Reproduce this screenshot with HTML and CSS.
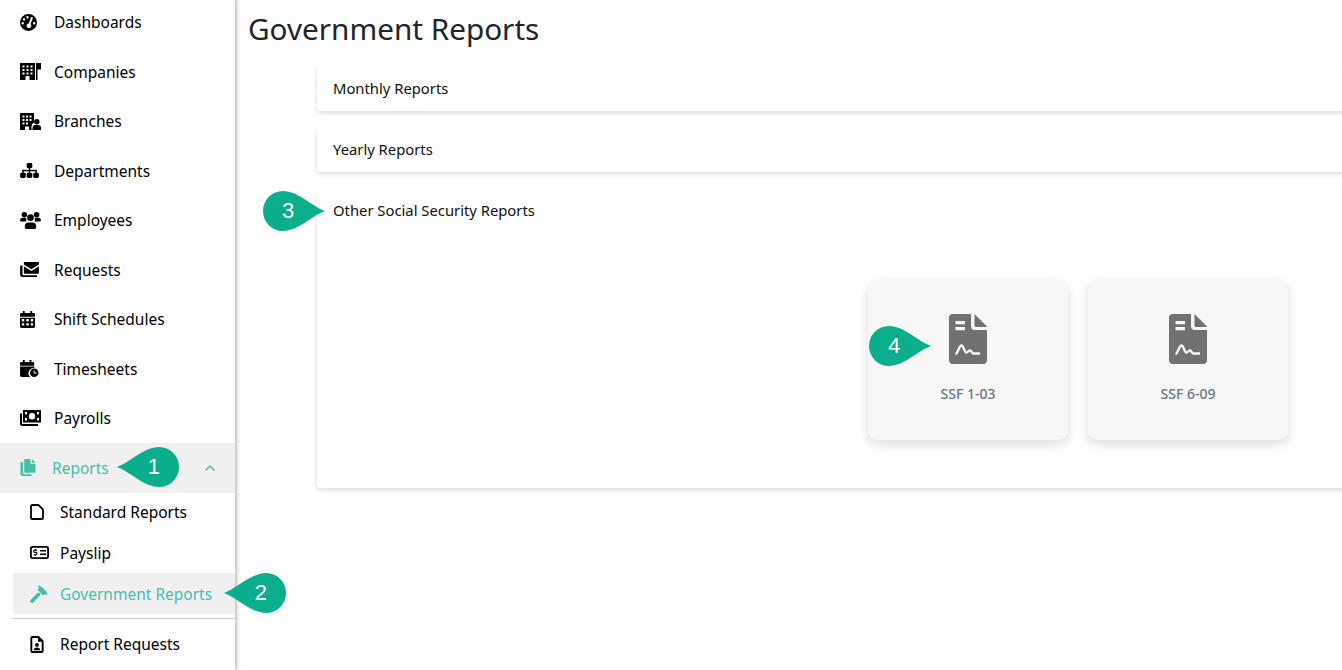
FILE: index.html
```html
<!DOCTYPE html>
<html lang="en">
<head>
<meta charset="utf-8">
<title>Government Reports</title>
<link rel="stylesheet" href="styles.css">
</head>
<body>
<div class="app">
  <nav class="sidebar">
    <a class="item"><i class="slot"><svg width="17" height="17" viewBox="0 0 18 18"><path fill-rule="evenodd" d="M9 0a9 9 0 1 1 0 18A9 9 0 0 1 9 0zM8 2.200a1.300 1.300 0 1 0 0 2.600 1.300 1.300 0 0 0 0-2.600zM4.300 4.400a1.300 1.300 0 1 0 0 2.600 1.300 1.300 0 0 0 0-2.600zM2.900 8.600a1.300 1.300 0 1 0 0 2.600 1.300 1.300 0 0 0 0-2.600zM15 8.600a1.300 1.300 0 1 0 0 2.600 1.300 1.300 0 0 0 0-2.600zM12.900 3.200a1 1 0 0 0-1.300.6L9.300 10a2.500 2.500 0 1 0 1.900.7l2.300-6.200a1 1 0 0 0-.6-1.300z"/></svg></i><span>Dashboards</span></a>
    <a class="item"><i class="slot"><svg width="21" height="17" viewBox="0 0 21 17"><path fill-rule="evenodd" d="M0 0h15v17H9.500v-4h-4v4H0zM2.500 2.500v2h2v-2zM6.500 2.500v2h2v-2zM10.500 2.500v2h2v-2zM2.500 6v2h2V6zM6.500 6v2h2V6zM10.500 6v2h2V6zM2.500 9.500v2h2v-2zM6.500 9.500v2h2v-2zM10.500 9.500v2h2v-2z"/><path d="M16 0h5v6.500h-3.500V17H16z"/></svg></i><span>Companies</span></a>
    <a class="item"><i class="slot"><svg width="21" height="17" viewBox="0 0 21 17"><path fill-rule="evenodd" d="M0 0h14v9.500a4.500 4.500 0 0 0-2.500 3.800V17H9v-3.500H5V17H0zM2.500 2.500v2h2v-2zM6 2.500v2h2v-2zM9.500 2.500v2h2v-2zM2.500 6v2h2V6zM6 6v2h2V6zM9.500 6v2h2V6zM2.500 9.500v2h2v-2zM6 9.500v2h2v-2z"/><circle cx="16.800" cy="8.800" r="2.700"/><path d="M12.500 17v-2.300c0-1.600 1.300-2.700 2.800-2.700h3c1.500 0 2.700 1.100 2.700 2.700V17z"/></svg></i><span>Branches</span></a>
    <a class="item"><i class="slot"><svg width="19" height="15" viewBox="0 0 20 16"><rect x="7" width="6" height="5.500" rx="1.500"/><rect x="9.250" y="5" width="1.500" height="6"/><rect x="2.300" y="7.300" width="15.400" height="1.500"/><rect x="2.300" y="7.300" width="1.500" height="4"/><rect x="16.200" y="7.300" width="1.500" height="4"/><rect y="10.500" width="6" height="5.500" rx="1.500"/><rect x="7" y="10.500" width="6" height="5.500" rx="1.500"/><rect x="14" y="10.500" width="6" height="5.500" rx="1.500"/></svg></i><span>Departments</span></a>
    <a class="item"><i class="slot"><svg width="21" height="17" viewBox="0 0 22 18"><circle cx="4.500" cy="2.900" r="2.900"/><circle cx="17.500" cy="2.900" r="2.900"/><circle cx="11" cy="6" r="3.500"/><path d="M0 9c0-1.800 1.100-2.800 2.300-2.800h2.600c.7 0 1.300.3 1.700.7a5 5 0 0 0 .2 3.100H1.500C.7 10 0 9.700 0 9zM22 9c0-1.800-1.100-2.800-2.300-2.800h-2.600c-.7 0-1.300.3-1.700.7.400 1 .4 2.200-.2 3.100h5.300c.8 0 1.500-.3 1.500-1zM5 15c0-2.400 1.700-4 3.700-4h4.600c2 0 3.700 1.600 3.700 4v1.500c0 .8-.7 1.500-1.500 1.500h-9C5.700 18 5 17.300 5 16.500z"/></svg></i><span>Employees</span></a>
    <a class="item"><i class="slot"><svg width="19" height="15" viewBox="0 0 20 16"><path d="M4 0h16v2.600l-8 5-8-5zM4 4.500l8 5 8-5v6.800a1.300 1.300 0 0 1-1.300 1.300H5.300A1.300 1.300 0 0 1 4 11.300z"/><path d="M0 3.700h2.500v9.400c0 .6.400 1 1 1H18V16H2.500A2.500 2.500 0 0 1 0 13.500z"/></svg></i><span>Requests</span></a>
    <a class="item"><i class="slot"><svg width="15" height="17" viewBox="0 0 16 18"><path fill-rule="evenodd" d="M3 0h2v2h6V0h2v2h1.500A1.500 1.500 0 0 1 16 3.500V6H0V3.500A1.500 1.500 0 0 1 1.500 2H3zM0 7h16v9.500a1.500 1.500 0 0 1-1.500 1.500h-13A1.500 1.500 0 0 1 0 16.500zM2 8.500V11h2.500V8.500zM6.700 8.500V11h2.600V8.500zM11.500 8.500V11H14V8.500zM2 13v2.500h2.500V13zM6.700 13v2.500h2.600V13zM11.500 13v2.500H14V13z"/></svg></i><span>Shift Schedules</span></a>
    <a class="item"><i class="slot"><svg width="19" height="17" viewBox="0 0 20 18"><path d="M3 0h2v2h5V0h2v2h1.500A1.500 1.500 0 0 1 15 3.500V6H0V3.500A1.500 1.500 0 0 1 1.500 2H3zM0 7h15v1.600a5.500 5.500 0 0 0-4.400 9.400H1.500A1.500 1.500 0 0 1 0 16.500z"/><path fill-rule="evenodd" d="M15 9a4.500 4.500 0 1 1 0 9 4.500 4.500 0 0 1 0-9zM14.500 11v3.200h3v-1h-2V11z"/></svg></i><span>Timesheets</span></a>
    <a class="item"><i class="slot"><svg width="21" height="16" viewBox="0 0 21 16"><path fill-rule="evenodd" d="M3 0h18v12.500H3zM12 3a3.200 3.200 0 1 0 0 6.400A3.200 3.200 0 0 0 12 3zM5 2v2.500h2V2zM17 8v2.500h2V8zM17 2v2.500h2V2zM5 8v2.500h2V8z"/><path d="M0 3.500h2v9.500c0 .6.400 1 1 1h15v2H2.500A2.500 2.500 0 0 1 0 13.500z"/></svg></i><span>Payrolls</span></a>
    <a class="item item-open"><i class="slot slot-open"><svg width="16" height="17" viewBox="0 0 16 18"><path d="M5 0h5.500v4a1.300 1.300 0 0 0 1.300 1.300H16v8.200a1 1 0 0 1-1 1H5a1 1 0 0 1-1-1V1a1 1 0 0 1 1-1z"/><path d="M12 0l4 4h-4z"/><path d="M0 4.500a1.200 1.200 0 0 1 1.200-1.200H2.700V14.500c0 .9.800 1.700 1.700 1.700H12v.600a1.200 1.200 0 0 1-1.200 1.200H2.800A2.800 2.800 0 0 1 0 15.200z"/></svg></i><span>Reports</span><svg class="chev" width="12" height="8" viewBox="0 0 12 8"><path d="M1.500 6.500 6 2l4.500 4.500" fill="none" stroke="currentColor" stroke-width="1.500"/></svg></a>
    <div class="subs">
      <a class="sub"><i class="slot-sub"><svg width="14" height="16" viewBox="0 0 14 16"><path d="M1 2.300A1.300 1.300 0 0 1 2.300 1H8.500L13 5.500v8.200a1.300 1.300 0 0 1-1.300 1.300H2.300A1.300 1.300 0 0 1 1 13.700z" fill="none" stroke="#000" stroke-width="1.800"/></svg></i><span>Standard Reports</span></a>
      <a class="sub"><i class="slot-sub"><svg width="19" height="13" viewBox="0 0 19 13"><rect x=".9" y=".9" width="17.200" height="11.200" rx="1.500" fill="none" stroke="#000" stroke-width="1.800"/><path d="M10 4h6v1.500h-6zM10 7.500h6V9h-6z"/><path d="M7 4.100H4.800a1 1 0 0 0 0 2.300h1a1 1 0 0 1 0 2.300H3.600M5.300 3v1M5.300 8.700v1.200" fill="none" stroke="#000" stroke-width="1.100"/></svg></i><span>Payslip</span></a>
      <a class="sub sub-active"><i class="slot-sub"><svg width="18" height="18" viewBox="0 0 18 18"><path d="M2.200 15.800 8.500 9.500" fill="none" stroke="currentColor" stroke-width="3.800" stroke-linecap="round"/><path d="M9.300 3 15 8.700" fill="none" stroke="currentColor" stroke-width="5"/><path d="M8.500 1 17 9.500" fill="none" stroke="currentColor" stroke-width="1.800"/></svg></i><span>Government Reports</span></a>
    </div>
    <hr class="rule">
    <a class="sub sub-last"><i class="slot-sub"><svg width="14" height="17" viewBox="0 0 14 18"><path fill-rule="evenodd" d="M2 0h7l5 5v11a2 2 0 0 1-2 2H2a2 2 0 0 1-2-2V2a2 2 0 0 1 2-2zM2 2v14h10V6H8V2zM7 7.500a2 2 0 1 0 0 4 2 2 0 0 0 0-4zM3.500 15c0-1.500 1.500-2.800 3.500-2.800s3.500 1.300 3.500 2.800z"/></svg></i><span>Report Requests</span></a>
  </nav>
  <main class="main">
    <h1 class="title">Government Reports</h1>
    <section class="panel"><h2 class="panel-head">Monthly Reports</h2></section>
    <section class="panel"><h2 class="panel-head">Yearly Reports</h2></section>
    <section class="panel panel-open">
      <h2 class="panel-head">Other Social Security Reports</h2>
      <div class="cards">
        <a class="card">
          <svg class="doc" width="38" height="50" viewBox="0 0 38 50"><path fill-rule="evenodd" d="M4 0h18v12a4 4 0 0 0 4 4h12v30a4 4 0 0 1-4 4H4a4 4 0 0 1-4-4V4a4 4 0 0 1 4-4zM6.500 7v3.300H16V7zM6.500 13v3.300H16V13z"/><path d="M25.500 0 38 12.500v.5H27a1.500 1.500 0 0 1-1.500-1.500z"/><path class="sig" d="M6.500 40C9 39.500 10 31.500 12.500 31.500 15 31.500 15 38.500 17.500 38.500 19 38.500 19.500 36.300 21 36.300 23 36.300 22.500 39.500 24.500 39.500H31"/></svg>
          <span class="card-label">SSF 1-03</span>
        </a>
        <a class="card">
          <svg class="doc" width="38" height="50" viewBox="0 0 38 50"><path fill-rule="evenodd" d="M4 0h18v12a4 4 0 0 0 4 4h12v30a4 4 0 0 1-4 4H4a4 4 0 0 1-4-4V4a4 4 0 0 1 4-4zM6.500 7v3.300H16V7zM6.500 13v3.300H16V13z"/><path d="M25.500 0 38 12.500v.5H27a1.500 1.500 0 0 1-1.500-1.500z"/><path class="sig" d="M6.500 40C9 39.500 10 31.500 12.500 31.500 15 31.500 15 38.500 17.500 38.500 19 38.500 19.500 36.300 21 36.300 23 36.300 22.500 39.500 24.500 39.500H31"/></svg>
          <span class="card-label">SSF 6-09</span>
        </a>
      </div>
    </section>
  </main>
  <div class="pin pin-left pin-1">1</div>
  <div class="pin pin-left pin-2">2</div>
  <div class="pin pin-right pin-3">3</div>
  <div class="pin pin-right pin-4">4</div>
</div>
</body>
</html>
```
FILE: styles.css
```css
* { box-sizing: border-box; }
html, body { margin: 0; height: 670px; overflow: hidden; background: #fff; }
body { font-family: "Noto Sans", "Liberation Sans", sans-serif; color: #212529; }
.app { position: relative; display: flex; width: 1342px; height: 670px; overflow: hidden; }

.sidebar {
  flex: 0 0 235px;
  height: 673px;
  margin-top: -2.5px;
  background: #fff;
  box-shadow: 1px 0 5px rgba(0, 0, 0, .35);
  z-index: 1;
}
.item { display: flex; align-items: center; height: 49.5px; padding-left: 20px; font-size: 15.5px; color: #000; }
.slot { display: flex; flex: 0 0 34px; align-items: center; font-style: normal; }
.slot svg { fill: #000; }
.item-open { background: #f0f0f0; color: #45bfa9; }
.slot-open { flex-basis: 32px; }
.slot-open svg { fill: #45bfa9; }
.chev { margin-left: auto; margin-right: 19px; color: #45bfa9; }

.subs { margin-top: -1.5px; padding-left: 13px; }
.sub { display: flex; align-items: center; height: 41px; padding-left: 17px; font-size: 15.5px; color: #000; }
.slot-sub { display: flex; flex: 0 0 30px; align-items: center; font-style: normal; }
.sub-active { background: #f0f0f0; color: #45bfa9; }
.rule { height: 1px; margin: 4px 0 0 13px; border: 0; background: #ccc; }
.sub-last { height: 50px; margin-left: 13px; }

.main { flex: 1 1 auto; min-width: 0; padding: 0 0 0 13px; }
.title { height: 66px; margin: 0; padding-top: 8px; font-size: 29.700px; line-height: 42px; font-weight: 400; color: #212529; }
.panel {
  margin: 0 -20px 16px 69px;
  height: 45px;
  background: #fff;
  border-radius: 4px;
  box-shadow: 0 2px 5px rgba(0, 0, 0, .14);
}
.panel-head { margin: 0; padding: 12px 16px; font-size: 14.800px; line-height: 21px; font-weight: 400; color: #111; }
.panel-open { height: 300px; }
.cards { display: flex; gap: 20px; padding: 47px 0 0 551px; }
.card {
  display: flex;
  flex: 0 0 200px;
  flex-direction: column;
  align-items: center;
  height: 160px;
  padding-top: 34px;
  border-radius: 10px;
  background: #f7f7f7;
  box-shadow: 0 4px 12px rgba(0, 0, 0, .14);
}
.doc { fill: #717171; }
.sig { fill: none; stroke: #f7f7f7; stroke-width: 2.300; }
.card-label { margin-top: 21px; font-size: 14px; line-height: 18px; font-weight: 500; color: #6c757d; }

.pin {
  position: absolute;
  z-index: 2;
  display: flex;
  align-items: center;
  width: 62px;
  height: 40px;
  background: #0aae8c;
  color: #fff;
  font-family: "Liberation Sans", sans-serif;
  font-size: 22px;
}
.pin-left {
  justify-content: flex-end;
  padding-right: 19px;
  clip-path: path("M0 20C12 16 27 0 42 0A20 20 0 0 1 42 40C27 40 12 24 0 20Z");
}
.pin-right {
  padding-left: 19px;
  clip-path: path("M62 20C50 16 35 0 20 0A20 20 0 0 0 20 40C35 40 50 24 62 20Z");
}
.pin-1 { left: 117px; top: 447px; }
.pin-2 { left: 224px; top: 573px; }
.pin-3 { left: 263px; top: 191px; }
.pin-4 { left: 869px; top: 326px; }
```
